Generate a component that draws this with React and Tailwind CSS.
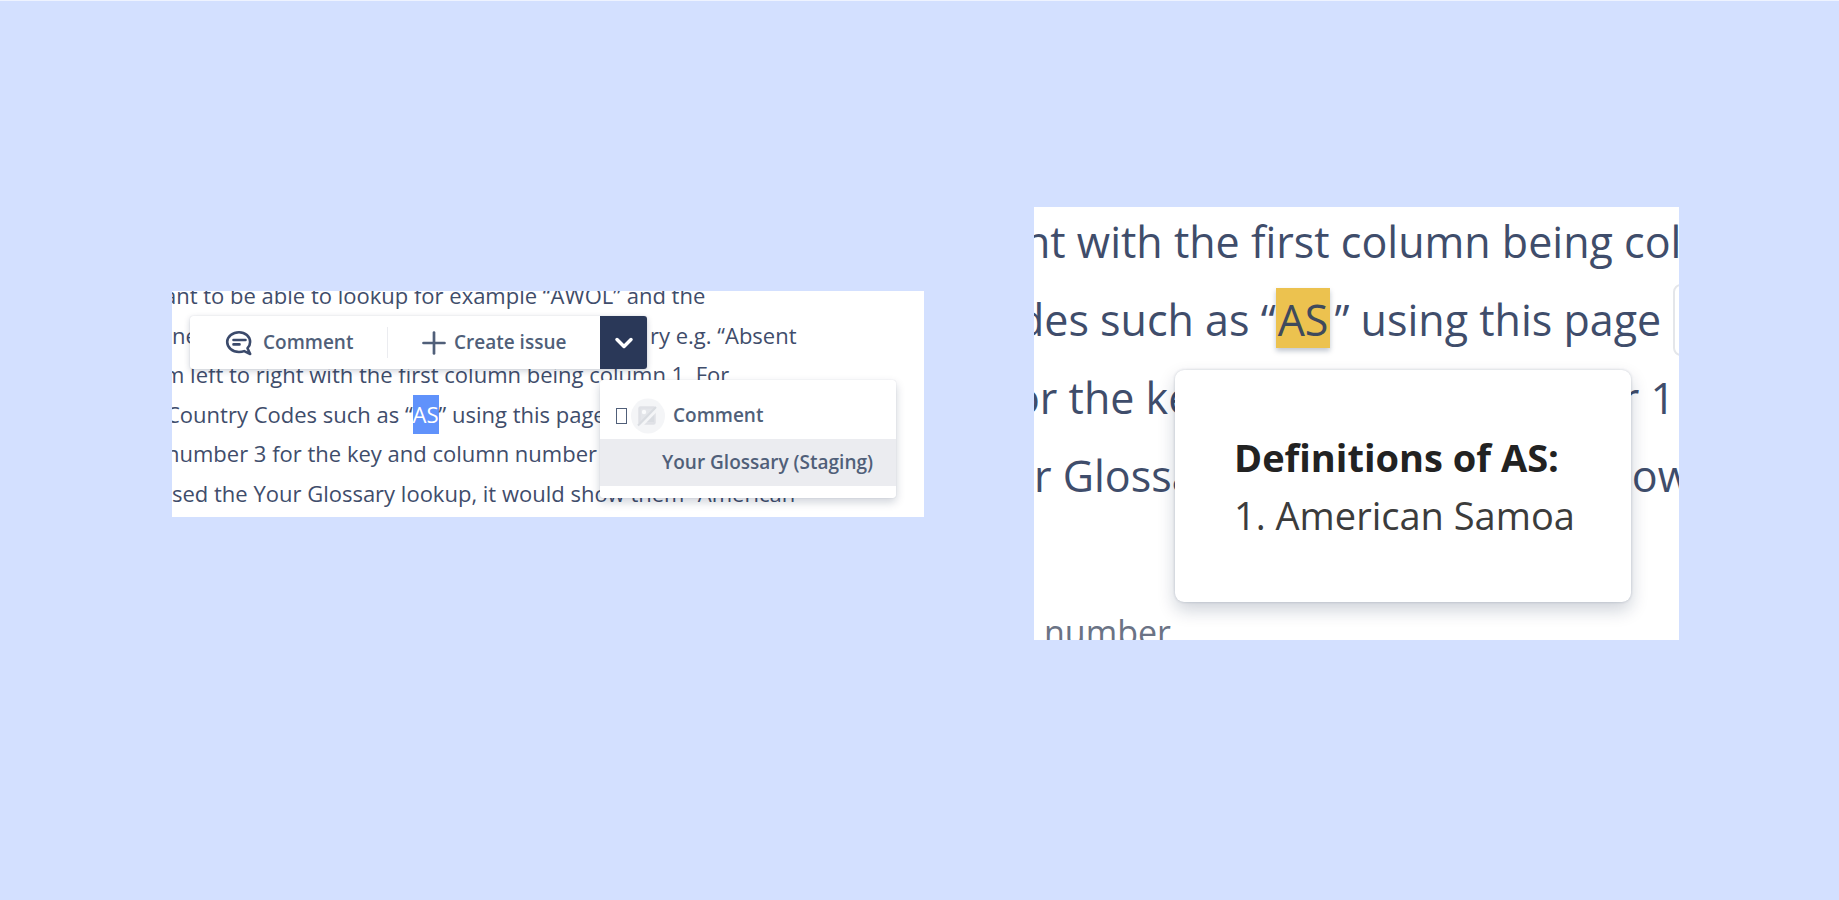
import { ChevronDown, Plus } from 'lucide-react'

function CommentIcon() {
  return (
    <svg width="28" height="26" viewBox="0 0 28 26" fill="none" stroke="#3b4a6b" strokeLinecap="round" aria-hidden="true">
      <path d="M22.500 18.200c1.700-1.700 2.600-3.800 2.600-6.200C25.100 6.600 20.200 2.200 14 2.200S2.200 6.600 2.200 12s5 10 11.800 10c2 0 3.700-.3 5.200-.9l6 2.900-2.700-5.800z" strokeWidth="2.600" strokeLinejoin="round" />
      <path d="M8.500 10h12M8.500 14.400h6" strokeWidth="2.600" />
    </svg>
  )
}

function BrokenImageIcon() {
  return (
    <svg width="34" height="36" viewBox="0 0 34 36" aria-hidden="true">
      <ellipse cx="17" cy="18" rx="17" ry="17.500" fill="#f4f5f7" />
      <rect x="8.500" y="9.500" width="15" height="16" rx="1" fill="#e4e6ea" stroke="#dfe1e6" strokeWidth="2.500" />
      <path d="M12 23l5-6 2 2 4-5v10H12z" fill="#d9dce1" />
      <circle cx="13" cy="14" r="2.200" fill="#fafbfc" />
      <path d="M9 29L27 10.500" stroke="#f4f5f7" strokeWidth="3" />
      <path d="M7 27.500L25 9" stroke="#d9dce1" strokeWidth="2" />
    </svg>
  )
}

function SelectionToolbar() {
  return (
    <div className="absolute top-[25px] left-[18px] z-10 flex h-[53px] w-[457px] rounded-[3px] bg-white text-[19px] font-semibold text-[#505f79] shadow-[0_2px_6px_rgba(9,30,66,0.2),0_0_1px_rgba(9,30,66,0.2)]">
      <button className="flex w-[197px] items-center gap-2.5 pl-[35px]">
        <CommentIcon />
        Comment
      </button>
      <div className="my-[11px] w-px bg-[#ebecf0]" />
      <button className="flex flex-1 items-center gap-0.5 pl-7">
        <Plus size={36} strokeWidth={1.8} />
        Create issue
      </button>
      <button aria-label="More actions" className="flex w-[47px] items-center justify-center rounded-r-[3px] bg-[#2a3858] text-white">
        <ChevronDown size={28} strokeWidth={3} />
      </button>
    </div>
  )
}

function ActionMenu() {
  return (
    <div className="absolute top-[89px] right-7 z-10 w-[296px] rounded-[3px] bg-white pt-3 pb-3 text-[19px] font-semibold text-[#505f79] shadow-[0_4px_10px_rgba(9,30,66,0.2),0_0_1px_rgba(9,30,66,0.2)]">
      <button className="flex h-[47px] w-full items-center pl-4">
        <span className="mr-1 h-4 w-[11px] border border-[#505f79]" />
        <BrokenImageIcon />
        <span className="ml-2">Comment</span>
      </button>
      <button className="flex h-[47px] w-full items-center bg-[#ebecf0] pl-[62px] whitespace-nowrap">
        Your Glossary (Staging)
      </button>
    </div>
  )
}

function LookupPanel() {
  return (
    <section className="relative mt-[84px] h-[226px] overflow-hidden bg-white whitespace-nowrap text-[#3f4d6b]">
      <div className="-mt-[15px] grid h-[237px] grid-rows-6 items-center text-[22px] leading-[39px]">
        <p className="-ml-2">ant to be able to lookup for example “AWOL” and the</p>
        <p className="flex">
          <span className="w-[478px]">ne</span>
          <span>ry e.g. “Absent</span>
        </p>
        <p className="-ml-2">m left to right with the first column being column 1. For</p>
        <p className="-ml-1.5">
          Country Codes such as “<mark className="inline-block bg-[#6092fb] text-white">AS</mark>” using this page
        </p>
        <p className="-ml-1.5">number 3 for the key and column number</p>
        <p>sed the Your Glossary lookup, it would show them “American</p>
      </div>
      <SelectionToolbar />
      <ActionMenu />
    </section>
  )
}

function Definition() {
  return (
    <div className="absolute top-[163px] left-[141px] w-[456px] rounded-[9px] bg-white pt-[58px] pb-[58px] pl-[59px] text-[38px] leading-[58px] text-[#3c3c3c] shadow-[0_8px_18px_rgba(9,30,66,0.2),0_0_3px_rgba(9,30,66,0.2)]">
      <h2 className="font-bold text-[#222]">Definitions of AS:</h2>
      <p>1. American Samoa</p>
    </div>
  )
}

function ResultPanel() {
  return (
    <section className="relative h-[433px] overflow-hidden bg-white text-[43px] leading-[78px] whitespace-nowrap text-[#3f4d6b]">
      <div className="-mt-1">
        <p className="-ml-2.5">nt with the first column being col</p>
        <p className="-ml-4 flex items-center">
          <span>des such as “</span>
          <mark className="mb-1 h-[60px] bg-[#ecc24f] px-0.5 leading-[64px] text-[#3f4a5c] shadow-[0_3px_5px_rgba(9,30,66,0.25)]">AS</mark>
          <span className="ml-1">” using this page</span>
          <span className="ml-3 h-[72px] w-10 shrink-0 rounded-lg border-2 border-[#e4e6ea]" />
        </p>
        <p className="-ml-5 flex justify-between pr-1">
          <span>or the key</span>
          <span>r 1</span>
        </p>
        <p className="-mr-3 flex justify-between">
          <span>r Glossary</span>
          <span>ow</span>
        </p>
        <p className="mt-[78px] pl-2.5 text-[34px] text-[#6b7385]">number</p>
      </div>
      <Definition />
    </section>
  )
}

export default function App() {
  return (
    <main className="grid min-h-screen grid-cols-[752fr_645fr] items-start gap-[110px] border-t border-[#eef3ff] bg-[#d3e0ff] pt-[206px] pr-40 pl-[172px] font-['Open_Sans','Noto_Sans',sans-serif]">
      <LookupPanel />
      <ResultPanel />
    </main>
  )
}
